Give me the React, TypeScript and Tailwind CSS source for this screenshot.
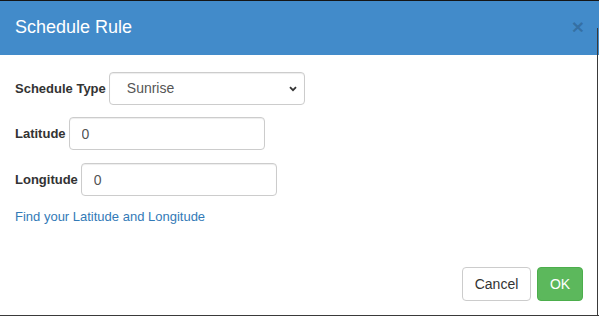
import React from "react";

export default function App() {
  return (
    <div className="relative flex h-[317px] w-[599px] flex-col overflow-hidden bg-white font-['Liberation_Sans',Arial,sans-serif]">
      <div className="h-px bg-[#151515]" />
      <div className="flex h-[54px] items-center bg-[#428bca] pl-[15px] pr-[15px]">
        <h4 className="pb-[2px] text-[18px] leading-[20px] text-white">Schedule Rule</h4>
        <button className="ml-auto pb-[4px] text-[21px] font-bold leading-none text-black/20">×</button>
      </div>
      <div className="pl-[15px] pt-[17px] text-[13px] text-[#333]">
        <div className="flex h-[33px] items-center">
          <label className="font-bold">Schedule Type</label>
          <div className="relative ml-[3px] h-[33px] w-[196px]">
            <select
              defaultValue="Sunrise"
              className="h-full w-full appearance-none rounded-[4px] border border-[#ccc] bg-white pl-[17px] text-[14px] text-[#555] shadow-[inset_0_1px_1px_rgba(0,0,0,0.075)] outline-none"
            >
              <option>Sunrise</option>
              <option>Sunset</option>
            </select>
            <svg className="pointer-events-none absolute right-[8px] top-[14px]" width="8" height="6" viewBox="0 0 8 6">
              <path d="M1 1.2 L4 4.2 L7 1.2" fill="none" stroke="#333" strokeWidth="1.8" />
            </svg>
          </div>
        </div>
        <div className="mt-[12px] flex h-[33px] items-center">
          <label className="font-bold">Latitude</label>
          <input
            defaultValue="0"
            className="ml-[3px] h-[33px] w-[196px] rounded-[4px] border border-[#ccc] pl-[12px] text-[14px] text-[#555] shadow-[inset_0_1px_1px_rgba(0,0,0,0.075)] outline-none"
          />
        </div>
        <div className="mt-[13px] flex h-[33px] items-center">
          <label className="font-bold">Longitude</label>
          <input
            defaultValue="0"
            className="ml-[3px] h-[33px] w-[196px] rounded-[4px] border border-[#ccc] pl-[12px] text-[14px] text-[#555] shadow-[inset_0_1px_1px_rgba(0,0,0,0.075)] outline-none"
          />
        </div>
        <div className="mt-[12px] leading-[18px]">
          <a className="text-[#337ab7]">Find your Latitude and Longitude</a>
        </div>
      </div>
      <div className="mt-auto flex justify-end gap-[6px] pb-[14px] pr-[16px]">
        <button className="h-[34px] w-[69px] rounded-[4px] border border-[#ccc] bg-white text-[14px] text-[#333]">Cancel</button>
        <button className="h-[34px] w-[46px] rounded-[4px] border border-[#4cae4c] bg-[#5cb85c] text-[14px] text-white">OK</button>
      </div>
      <div className="h-px bg-[#3a3a3a]" />
      <div className="h-px bg-white" />
      <div className="absolute bottom-[2px] right-[1px] top-[28px] w-px bg-[#3a3a3a]" />
    </div>
  );
}
